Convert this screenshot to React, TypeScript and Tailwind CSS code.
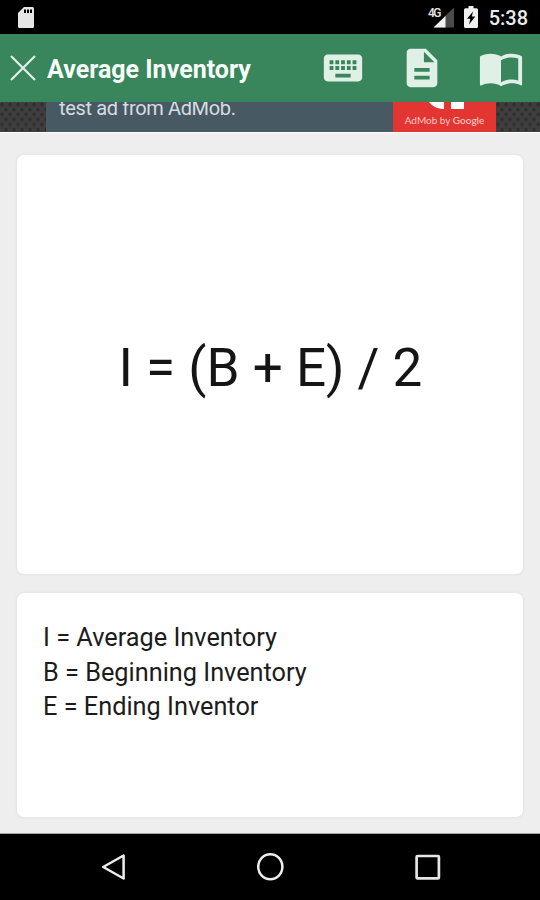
import { MdDescription, MdImportContacts, MdKeyboard } from "react-icons/md";

const terms = [
  "I = Average Inventory",
  "B = Beginning Inventory",
  "E = Ending Inventor",
];

function StatusBar() {
  return (
    <div className="flex h-[34px] shrink-0 items-start bg-black">
      <svg className="mt-[7px] ml-[18px] h-[21px] w-4" viewBox="0 0 16 21">
        <path
          d="M6 0h8.500A1.500 1.500 0 0 1 16 1.500v18a1.500 1.500 0 0 1-1.500 1.500h-13A1.500 1.500 0 0 1 0 19.500V6z"
          fill="#e6e6e6"
        />
        <path d="M6 2.500h2V6H6zM9 2.500h2V6H9zM12 2.500h2V6h-2z" fill="#000" />
      </svg>
      <div className="flex-1" />
      <svg className="mt-1.5 h-[23px] w-[28px]" viewBox="0 0 28 23">
        <path d="M26 1.500V21.500H5.500L16.500 11V10.500z" fill="#4a4a4a" />
        <path d="M17.500 10V21.500H5.500z" fill="#f2f2f2" />
        <text
          x="0"
          y="10.500"
          textLength="13.500"
          fontSize="12"
          fontWeight="500"
          fontFamily="Roboto, sans-serif"
          fill="#e6e6e6"
        >
          4G
        </text>
      </svg>
      <svg className="mt-1.5 ml-2 h-[22px] w-[14px]" viewBox="0 0 14 22">
        <path
          d="M4.500 0h5v2.200h3A1.500 1.500 0 0 1 14 3.700v16.800a1.500 1.500 0 0 1-1.500 1.500h-11A1.500 1.500 0 0 1 0 20.500V3.700a1.500 1.500 0 0 1 1.500-1.500h3z"
          fill="#f0f0f0"
        />
        <path d="M9 5.500L3 12.800h3.300l-1.300 5.700 6.300-8H7.800z" fill="#000" />
      </svg>
      <span className="mt-2 mr-3 ml-[11px] text-[20px] leading-[21px] font-medium text-[#ececec]">
        5:38
      </span>
    </div>
  );
}

function AppBar() {
  return (
    <header className="flex h-[68px] shrink-0 items-center bg-[#39855c] pr-4 pl-2.5 text-[#e1f0e6]">
      <svg className="h-[26px] w-[26px]" viewBox="0 0 26 26" stroke="currentColor" strokeWidth="2.200">
        <path d="M1 1l24 24M25 1L1 25" />
      </svg>
      <h1 className="mt-1 ml-[11px] flex-1 text-[25px] font-bold whitespace-nowrap text-[#f7fff9]">
        Average Inventory
      </h1>
      <div className="flex gap-[33px]">
        <MdKeyboard size={46} />
        <MdDescription size={46} />
        <MdImportContacts size={46} />
      </div>
    </header>
  );
}

function Mesh({ id }: { id: string }) {
  return (
    <svg className="h-full w-full">
      <defs>
        <pattern id={id} width="8" height="10" patternUnits="userSpaceOnUse">
          <rect width="8" height="10" fill="#3e3e3e" />
          <ellipse cx="2" cy="2.500" rx="1.600" ry="2" fill="#2e2e2e" />
          <ellipse cx="6" cy="7.500" rx="1.600" ry="2" fill="#2e2e2e" />
        </pattern>
      </defs>
      <rect width="100%" height="100%" fill={`url(#${id})`} />
    </svg>
  );
}

function AdBanner() {
  return (
    <div className="flex h-[30px] shrink-0 overflow-hidden">
      <div className="w-[46px]">
        <Mesh id="mesh-left" />
      </div>
      <div className="flex w-[347px] items-end overflow-hidden bg-[#475963] pl-[13px]">
        <span className="mb-3 text-[20px] leading-6 tracking-[-0.35px] whitespace-nowrap text-[#d5dde1]">
          test ad from AdMob.
        </span>
      </div>
      <div className="flex w-[103px] flex-col items-center bg-[#e33632]">
        <svg className="h-[7px] w-[38px]" viewBox="0 0 38 7">
          <path d="M3 0h15v7C12 7 6.500 4.500 3 0zM25 0h13v7H25z" fill="#fff" />
        </svg>
        <span className="mt-[5px] font-[Lato] text-[10px] leading-3 whitespace-nowrap text-[#fbc9c5]">
          AdMob by <span className="font-medium">Google</span>
        </span>
      </div>
      <div className="flex-1">
        <Mesh id="mesh-right" />
      </div>
    </div>
  );
}

function NavBar() {
  return (
    <nav className="flex h-[66px] shrink-0 items-center justify-between bg-black pr-[99px] pl-[101px]">
      <svg className="h-[30px] w-[25px]" viewBox="0 0 25 30" fill="none" stroke="#ededed" strokeWidth="2.500">
        <path d="M22.600 3.500v23L2.200 15z" strokeLinejoin="round" />
      </svg>
      <svg className="h-[30px] w-[28px]" viewBox="0 0 28 30" fill="none" stroke="#ededed" strokeWidth="2.500">
        <ellipse cx="13.300" cy="14.800" rx="12.100" ry="12.500" />
      </svg>
      <svg className="h-[30px] w-[26px]" viewBox="0 0 26 30" fill="none" stroke="#e6e6e6" strokeWidth="2.700">
        <rect x="1.600" y="4" width="22.300" height="22.400" rx="1" />
      </svg>
    </nav>
  );
}

export default function App() {
  return (
    <div className="flex h-[900px] w-[540px] flex-col overflow-hidden bg-[#eeeeee] font-[Roboto,sans-serif]">
      <StatusBar />
      <AppBar />
      <AdBanner />
      <main className="flex flex-1 flex-col gap-[19px] border-t border-b border-t-white border-b-[#a0a6a3] px-[17px] pt-[22px] pb-4">
        <section className="flex h-[419px] items-center justify-center rounded-[7px] bg-white shadow-[0_0_2px_1px_#e4e4e4]">
          <p className="mt-2 ml-px text-[53px] leading-none whitespace-nowrap text-[#151515]">
            I = (B + E) / 2
          </p>
        </section>
        <section className="h-[224px] rounded-[7px] bg-white px-[26px] pt-7 text-[25.3px] leading-[34.500px] text-[#1c1c1c] shadow-[0_0_2px_1px_#e4e4e4]">
          {terms.map((term) => (
            <p key={term}>{term}</p>
          ))}
        </section>
      </main>
      <NavBar />
    </div>
  );
}
